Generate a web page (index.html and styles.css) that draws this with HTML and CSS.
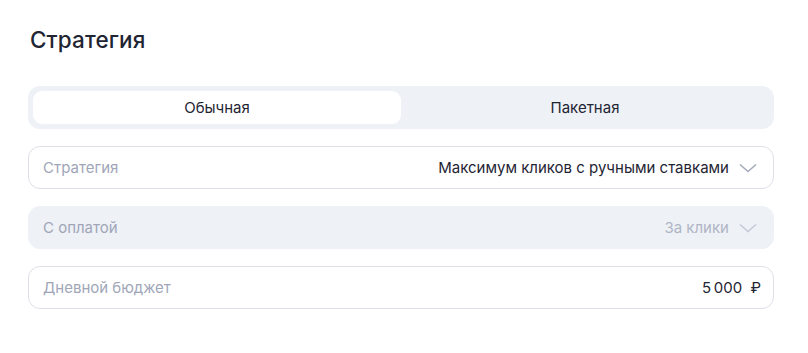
FILE: index.html
```html
<!DOCTYPE html>
<html lang="ru">
<head>
<meta charset="utf-8">
<link rel="stylesheet" href="styles.css">
</head>
<body>
<div class="page">
  <h1 class="title">Стратегия</h1>
  <div class="segmented">
    <div class="seg seg-active">Обычная</div>
    <div class="seg">Пакетная</div>
  </div>
  <div class="field">
    <span class="label">Стратегия</span>
    <span class="value">Максимум кликов с ручными ставками</span>
    <svg class="chev" width="18" height="10" viewBox="0 0 18 10"><path d="M1 1.5 L9 8.5 L17 1.5" fill="none" stroke="#a3a9ba" stroke-width="1.4"/></svg>
  </div>
  <div class="field field-disabled">
    <span class="label">С оплатой</span>
    <span class="value value-muted">За клики</span>
    <svg class="chev" width="18" height="10" viewBox="0 0 18 10"><path d="M1 1.5 L9 8.5 L17 1.5" fill="none" stroke="#c3c8d6" stroke-width="1.4"/></svg>
  </div>
  <div class="field">
    <span class="label">Дневной бюджет</span>
    <span class="value">5&#8201;000 <span class="cur">₽</span></span>
  </div>
</div>
</body>
</html>
```
FILE: styles.css
```css
html, body { margin: 0; padding: 0; background: #fff; }
body { font-family: Inter, Roboto, "Noto Sans", sans-serif; color: #1f2533; }
.page { padding: 26px 34px 0 28px; display: flex; flex-direction: column; }
.title { margin: 0 0 0 2px; font-size: 22.5px; font-weight: 500; line-height: 28px; color: #1f2533; letter-spacing: 0.1px; }
.segmented { margin-top: 32px; height: 43px; box-sizing: border-box; padding: 5px 5px; background: #eef1f6; border-radius: 12px; display: grid; grid-template-columns: 1fr 1fr; }
.seg { display: flex; align-items: center; justify-content: center; font-size: 15px; color: #1f2533; border-radius: 9px; }
.seg-active { background: #fff; }
.field { margin-top: 17px; height: 43px; box-sizing: border-box; border: 1px solid #dde0e8; border-radius: 12px; display: flex; align-items: center; padding: 0 16px 0 14px; font-size: 15px; white-space: nowrap; }
.field-disabled { background: #eef1f6; border-color: #eef1f6; }
.label { color: #a0a6b8; flex: 1; }
.value { color: #1f2533; }
.value-muted { color: #b0b5c5; }
.cur { margin-left: 4px; margin-right: -4px; }
.chev { margin-left: 10px; }
```
